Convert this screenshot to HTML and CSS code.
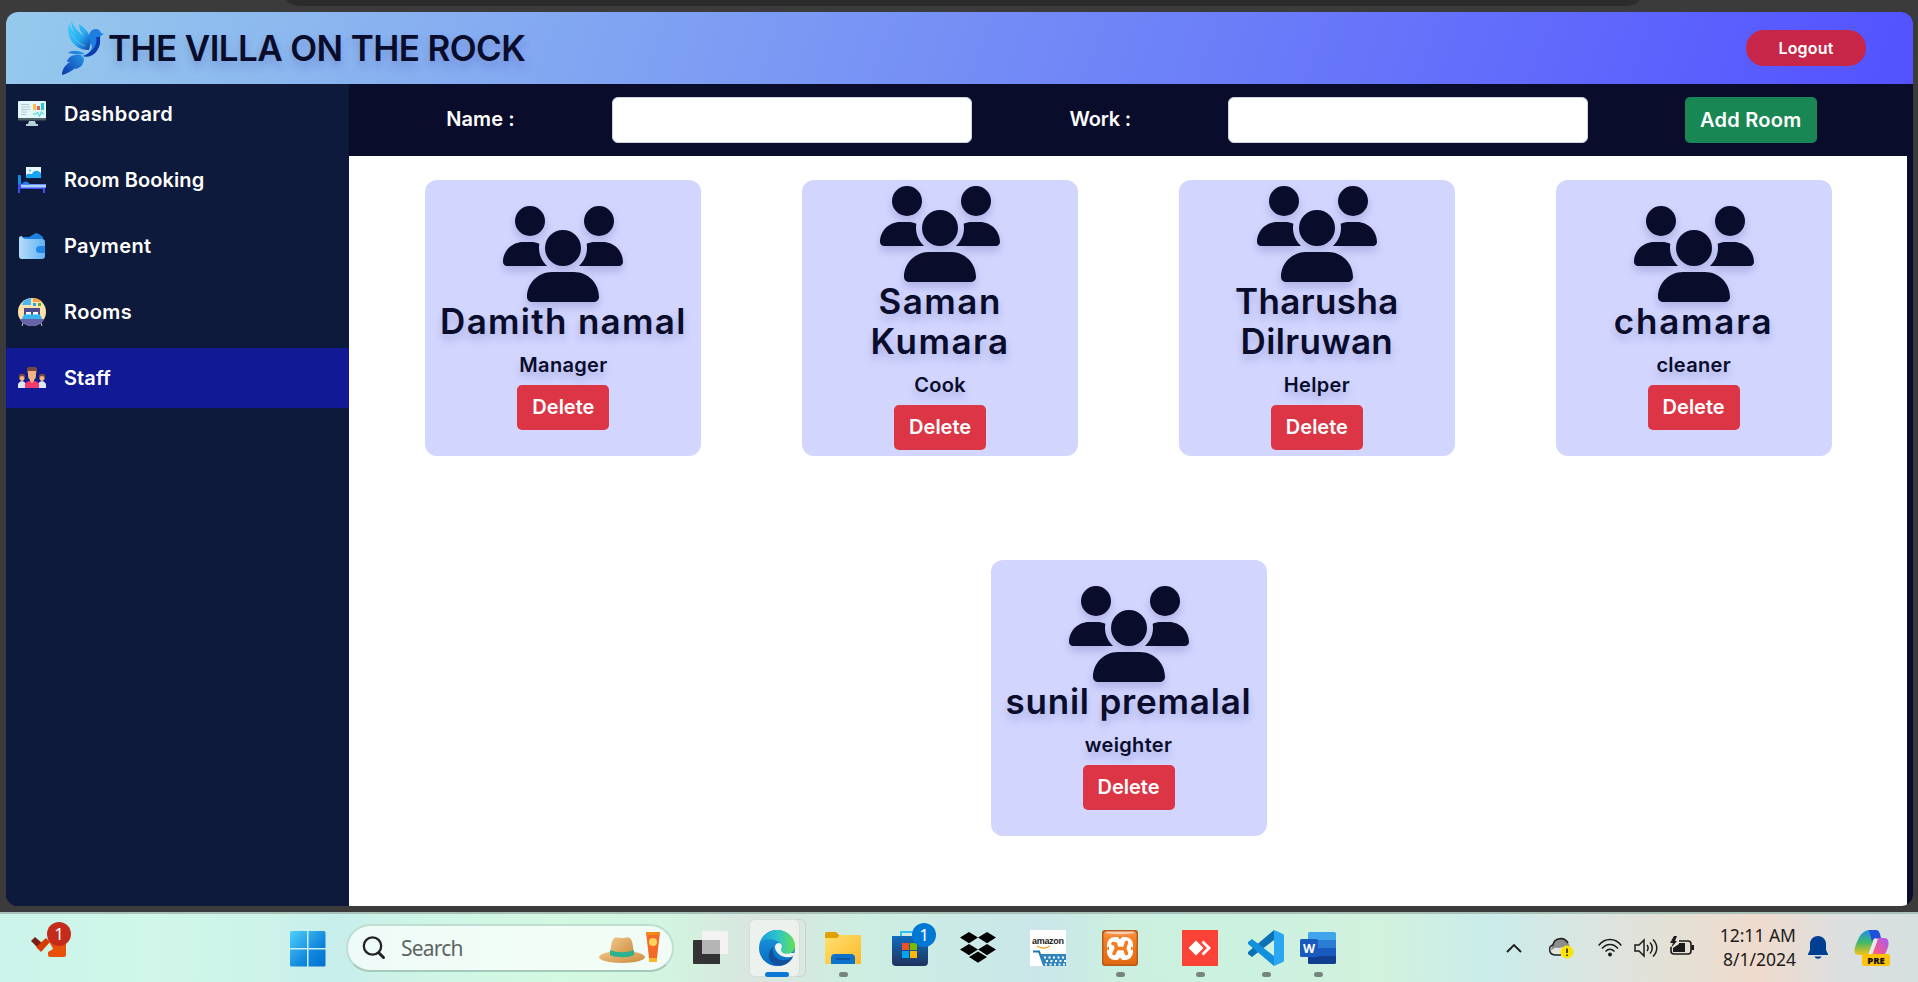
FILE: index.html
```html
<!DOCTYPE html>
<html lang="en">
<head>
<meta charset="utf-8">
<title>The Villa On The Rock</title>
<link rel="stylesheet" href="styles.css">
</head>
<body>
<svg width="0" height="0" class="defs">
  <defs>
    <linearGradient id="wing" x1="0" y1="0" x2="1" y2="1"><stop offset="0" stop-color="#3ad0fb"/><stop offset=".55" stop-color="#2aaef0"/><stop offset="1" stop-color="#0a3fae"/></linearGradient>
    <linearGradient id="tail" x1="1" y1="0" x2="0" y2="1"><stop offset="0" stop-color="#2aa0ee"/><stop offset="1" stop-color="#0a36a8"/></linearGradient>
    <linearGradient id="win" x1="0" y1="0" x2="1" y2="1"><stop offset="0" stop-color="#4fd0fd"/><stop offset=".6" stop-color="#1287dc"/><stop offset="1" stop-color="#0070cf"/></linearGradient>
    <linearGradient id="wallet" x1="0" x2="1"><stop offset="0" stop-color="#b5dcfb"/><stop offset="1" stop-color="#62b2f3"/></linearGradient>
    <linearGradient id="folder" x1="0" y1="0" x2="1" y2="1"><stop offset="0" stop-color="#ffe06f"/><stop offset="1" stop-color="#fdb92b"/></linearGradient>
    <linearGradient id="bag" x1="0" y1="0" x2="0" y2="1"><stop offset="0" stop-color="#0f6cbd"/><stop offset="1" stop-color="#20325f"/></linearGradient>
    <linearGradient id="edgeTop" x1="0" x2="1"><stop offset="0" stop-color="#1a9fdc"/><stop offset=".5" stop-color="#2dc4cd"/><stop offset="1" stop-color="#62e150"/></linearGradient>
    <linearGradient id="edgeBlue" x1="0" y1="0" x2="0" y2="1"><stop offset="0" stop-color="#199be0"/><stop offset="1" stop-color="#0a6ac0"/></linearGradient>
    <linearGradient id="xampp" x1="0" y1="0" x2="0" y2="1"><stop offset="0" stop-color="#f5964e"/><stop offset=".3" stop-color="#f47a1f"/><stop offset="1" stop-color="#e06a12"/></linearGradient>
    <linearGradient id="copA" x1="0" y1="0" x2="0" y2="1"><stop offset="0" stop-color="#1f8fe8"/><stop offset=".5" stop-color="#43b86a"/><stop offset="1" stop-color="#f6c317"/></linearGradient>
    <linearGradient id="copB" x1="1" y1="0" x2="0" y2="1"><stop offset="0" stop-color="#a758f5"/><stop offset=".6" stop-color="#ee5a94"/><stop offset="1" stop-color="#fb8a4a"/></linearGradient>
    <linearGradient id="hat" x1="0" y1="0" x2="1" y2="1"><stop offset="0" stop-color="#f2c78a"/><stop offset="1" stop-color="#c98a3c"/></linearGradient>
    <symbol id="users" viewBox="0 0 640 512"><path d="M144 0a80 80 0 1 1 0 160A80 80 0 1 1 144 0zM512 0a80 80 0 1 1 0 160A80 80 0 1 1 512 0zM0 298.7C0 239.8 47.8 192 106.7 192h42.7c15.900 0 31 3.500 44.600 9.700c-1.300 7.200-1.900 14.700-1.900 22.300c0 38.200 16.800 72.500 43.300 96c-.2 0-.4 0-.7 0H21.300C9.600 320 0 310.400 0 298.700zM405.300 320c-.2 0-.4 0-.7 0c26.600-23.500 43.300-57.800 43.300-96c0-7.600-.7-15-1.900-22.300c13.600-6.300 28.700-9.700 44.600-9.700h42.700C592.200 192 640 239.800 640 298.700c0 11.800-9.600 21.300-21.300 21.300H405.300zM224 224a96 96 0 1 1 192 0 96 96 0 1 1-192 0zM128 485.300C128 411.700 187.700 352 261.300 352H378.700C452.300 352 512 411.700 512 485.300c0 14.700-11.900 26.700-26.700 26.700H154.700c-14.700 0-26.700-11.900-26.700-26.700z"/></symbol>
  </defs>
</svg>

<div class="browser-top"><div class="address-pill"></div></div>

<div class="window">
  <header class="header">
    <svg class="logo" viewBox="0 0 42 56">
      <path fill="url(#wing)" d="M9 1c0 6 2 11 5 15C10 12 8 7 7 4c-2 9 0 17 6 22 4 4 9 5 14 5l2-8C28 13 22 9 17 5c0 5 2 9 5 12C16 13 12 8 9 1z"/>
      <path fill="#1c7fe0" d="M27 18c0-5 3-8 7-8 3 0 4 2 5 4l3 1c-3 1-4 2-4 6 0 7-5 12-10 16-2 1-5 1-7 0 5-2 8-5 9-9z"/>
      <path fill="#0b3cae" d="M34 18c2 6-2 12-6 15-2 2-4 3-7 4 6 2 12-1 15-7 3-5 2-9 2-12z"/>
      <path fill="url(#tail)" d="M23 35c-6-4-13-4-17-1 6 1 11 2 17 1zM21 37c-7-3-15 0-16 6 7 0 12-3 16-6zM22 38C11 39 0 46 0 56c9-2 17-9 22-18zM22 39c-5 3-8 7-9 11 6-1 9-5 9-11z"/>
      <path stroke="#8cc8ef" stroke-width=".6" fill="none" d="M9 14c4 7 8 11 14 13"/>
    </svg>
    <h1 class="title">THE VILLA ON THE ROCK</h1>
    <button class="logout">Logout</button>
  </header>

  <div class="body">
    <nav class="sidebar">
      <a class="nav-item"><svg class="nav-icon" viewBox="0 0 28 28"><path fill="#e0f7fb" d="M1 1h26a1 1 0 0 1 1 1v17H0V2a1 1 0 0 1 1-1z"/><path fill="#4d6068" d="M0 18h28v1.500a1 1 0 0 1-1 1H1a1 1 0 0 1-1-1z"/><path fill="#b3d3da" d="M11 21h6l1 3h2v2H8v-2h2z"/><path stroke="#b7c7cc" d="M3 4.500h8M3 7h9M3 9.500h9M3 12h6M3 14.500h5"/><path fill="#fdbf4a" d="M15 4h3v6h-3z"/><path fill="#f4594f" d="M19 6h3v4h-3z"/><path fill="#22c7cf" d="M23 3h3v7h-3z"/><path fill="none" stroke="#35cfcf" d="M15 14h3l1.500-2 2 4.500 2-5 1.500 2.500h1"/></svg><span>Dashboard</span></a>
      <a class="nav-item"><svg class="nav-icon" viewBox="0 0 28 28"><path fill="#e9f7ff" d="M8 1h15v11H8z"/><path fill="#17a3f7" d="M8 9c2-2 4-1 6-1 1-3 4-4 6-3l3 2v5H8z"/><circle cx="12" cy="4.500" r="1" fill="#38b6f5"/><path fill="#0d8ef0" d="M0 9h2a1 1 0 0 1 1 1v10H0z"/><path fill="#3f4ff0" d="M0 18h28v4h-1v5h-2v-4H2v4H0z"/><path fill="#a9d3ff" d="M3 18.500h25v3H3z"/><path fill="#1d7bf0" d="M4 18.500c1-4 6-4 8 0z"/></svg><span class="tight">Room Booking</span></a>
      <a class="nav-item"><svg class="nav-icon" viewBox="0 0 28 28"><path fill="#1a82e2" d="M4 5h7l7-4 3 1 4 3v4H4z"/><path fill="url(#wallet)" d="M1 6c0-1 1-2 3-2 0 2 2 3 4 3h16a3 3 0 0 1 3 3v14a3 3 0 0 1-3 3H4a3 3 0 0 1-3-3z"/><path fill="#1f8ae6" d="M27 14v7h-5.500a3.500 3.500 0 0 1 0-7z"/></svg><span>Payment</span></a>
      <a class="nav-item"><svg class="nav-icon" viewBox="0 0 28 28"><circle cx="14" cy="14" r="14" fill="#fde3ab"/><path fill="#49b8f5" d="M5 4c3-3 6-4 8-4v7H4z"/><path fill="#f6a04a" d="M15 0c4 0 7 1.500 9 4h-9z"/><path fill="#2ba7e0" d="M15 5h3v3h-3z"/><path fill="#57ad36" d="M20 5h3v3h-3z"/><path fill="#4c4a8c" d="M6 10h16v10H6z"/><path fill="#fff" d="M8 14h5v3H8zM15 14h5v3h-5z"/><path fill="#38b4ef" d="M6 16.500h16l3 6H3z"/><path fill="#6763a8" d="M2 21h24c-2 4.500-7 7-12 7S4 25.500 2 21z"/><path stroke="#c9c7d8" d="M5 25l-1 3M23 25l1 3"/></svg><span>Rooms</span></a>
      <a class="nav-item active"><svg class="nav-icon" viewBox="0 0 28 28"><circle cx="4" cy="13" r="3.200" fill="#7a4a3e"/><circle cx="24" cy="13" r="3.200" fill="#7a4a3e"/><circle cx="4" cy="14.500" r="2.400" fill="#efb680"/><circle cx="24" cy="14.500" r="2.400" fill="#efb680"/><path fill="#dfe7f5" d="M0 24v-4c1-2 3-3 4-3s3 1 4 3v4zM20 24v-4c1-2 3-3 4-3s3 1 4 3v4z"/><path fill="#7a4a3e" d="M9 9V5c0-2 2-2 3-2h6l1 2v4z"/><path fill="#f0b57c" d="M10 7h8v5c0 2-1 3-2 4v3h-4v-3c-1-1-2-2-2-4z"/><path fill="#f23a6d" d="M7 24v-4c1-2 3-3 5-3l2 2 2-2c2 0 4 1 5 3v4z"/></svg><span class="tight">Staff</span></a>
    </nav>

    <main class="main">
      <form class="form-bar">
        <label class="lbl-name">Name :</label><input class="field" type="text">
        <label class="lbl-work">Work :</label><input class="field" type="text">
        <button class="add" type="button">Add Room</button>
      </form>
      <section class="cards">
        <article class="card"><svg class="people"><use href="#users"/></svg><h2 class="n1">Damith namal</h2><p>Manager</p><button class="delete">Delete</button></article>
        <article class="card"><svg class="people"><use href="#users"/></svg><h2 class="n2">Saman<br>Kumara</h2><p>Cook</p><button class="delete">Delete</button></article>
        <article class="card"><svg class="people"><use href="#users"/></svg><h2 class="n3">Tharusha<br>Dilruwan</h2><p>Helper</p><button class="delete">Delete</button></article>
        <article class="card"><svg class="people"><use href="#users"/></svg><h2 class="n4">chamara</h2><p>cleaner</p><button class="delete">Delete</button></article>
        <article class="card"><svg class="people"><use href="#users"/></svg><h2 class="n5">sunil premalal</h2><p>weighter</p><button class="delete">Delete</button></article>
      </section>
    </main>
  </div>
</div>

<footer class="taskbar">
  <div class="app widget"><svg viewBox="0 0 42 36"><path fill="#7c1d14" d="M1 15l4-4 7 6-3 6z"/><path fill="#d83b01" d="M6 21l10-9 4 4-9 10z"/><path fill="#e8510a" d="M18 13h18v16a2 2 0 0 1-2 2H20a2 2 0 0 1-2-2v-3l5-3z"/><path fill="#d0f4e8" d="M18 19l5 3-5 3z"/></svg><span class="badge red">1</span></div>
  <div class="app start"><svg viewBox="0 0 36 36"><path fill="url(#win)" d="M1.500 0H17v17H0V1.500A1.500 1.500 0 0 1 1.500 0zM18.500 0H34a1.500 1.500 0 0 1 1.500 1.500V17h-17zM0 18.500h17v17H1.500A1.500 1.500 0 0 1 0 34zM18.500 18.500h17V34a1.500 1.500 0 0 1-1.500 1.500H18.500z"/></svg></div>
  <div class="search">
    <svg class="lens" viewBox="0 0 24 24"><circle cx="10.500" cy="10" r="8.700" fill="none" stroke="#222" stroke-width="2.300"/><path stroke="#222" stroke-width="3" stroke-linecap="round" d="M17 17l4.500 4.500"/></svg>
    <span>Search</span>
    <svg class="summer" viewBox="0 0 62 34"><ellipse cx="23" cy="26" rx="23" ry="6" fill="url(#hat)"/><path fill="url(#hat)" d="M11 24c1-7 1-14 4-17 3-1 5 0 8 0s5-1 8 0c3 3 3 10 4 17-4 3-20 3-24 0z"/><path fill="#2bb391" d="M11 19c7 3 17 3 24 0v5c-6 3-18 3-24 0z"/><path fill="#f4692a" d="M47 1h14l-3 26h-8z"/><path fill="#f28a14" d="M47 1h14v3H47z"/><circle cx="54" cy="11" r="4" fill="#ffd65a"/><path fill="#f9b52a" d="M50 27h8v4h-8z"/></svg>
  </div>
  <div class="app taskview"><svg viewBox="0 0 36 36"><path fill="#333" d="M0 10a1 1 0 0 1 1-1h26v24H1a1 1 0 0 1-1-1z"/><path fill="#f3f3f3" d="M9 1a1 1 0 0 1 1-1h24a1 1 0 0 1 1 1v22H9z"/><path fill="#b5b5b5" d="M9 9h18v14H9z"/></svg></div>
  <div class="app edge"><svg viewBox="0 0 36 36"><circle cx="18" cy="18" r="18" fill="url(#edgeBlue)"/><path fill="#12509c" d="M14 17c-2 8 5 15 13 13 3 0 5-2 7-3C29 37 17 38 12 32c-4-5-2-12 2-15z"/><path fill="url(#edgeTop)" d="M1 13C4 4 11 0 18 0c10 0 18 7 18 16 0 5-4 8-8 8-5 0-7-2-6-4 2-3 1-7-4-9C12 8 4 9 1 13z"/><path fill="#edf5f3" d="M22 14c2 3 0 5 0 6 0 3 5 5 10 3h4c-1 4-5 5-10 4-7-1-11-8-10-11 1-3 4-4 6-2z"/></svg><i class="mark on"></i></div>
  <div class="app explorer"><svg viewBox="0 0 36 36"><path fill="#e2a000" d="M0 4a2 2 0 0 1 2-2h9l4 4v6H0z"/><path fill="url(#folder)" d="M0 8h12l3-3h20a1 1 0 0 1 1 1v27a1 1 0 0 1-1 1H1a1 1 0 0 1-1-1z"/><path fill="#0d72cc" d="M6 34v-6a4 4 0 0 1 4-4h16a4 4 0 0 1 4 4v6z"/><path stroke="#0a4f98" stroke-width="1.500" d="M11 29h14"/></svg><i class="mark"></i></div>
  <div class="app store"><svg viewBox="0 0 36 36"><path fill="none" stroke="#31c3ee" stroke-width="2" d="M9 8V2h16"/><path fill="url(#bag)" d="M0 6h36v26a4 4 0 0 1-4 4H4a4 4 0 0 1-4-4z"/><path fill="#f25022" d="M10 13h7v7h-7z"/><path fill="#7fba00" d="M18 13h7v7h-7z"/><path fill="#00a4ef" d="M10 21h7v7h-7z"/><path fill="#ffb900" d="M18 21h7v7h-7z"/></svg><span class="badge blue">1</span></div>
  <div class="app dropbox"><svg viewBox="0 0 36 36"><path d="M9 2l9 5.600-9 5.700-9-5.700zM27 2l9 5.600-9 5.700-9-5.700zM9 14l9 5.600-9 5.600-9-5.600zM27 14l9 5.600-9 5.600-9-5.600zM18 21.500l9 5.600-9 5.700-9-5.700z"/></svg></div>
  <div class="app amazon"><svg viewBox="0 0 36 36"><path fill="#fff" d="M0 0h36v36H0z"/><text x="2" y="14" textLength="32" class="amz">amazon</text><path fill="none" stroke="#f79400" stroke-width="1.200" d="M7 16c4 2.500 9 2.500 13 0"/><path fill="none" stroke="#1b78b4" stroke-width="2" d="M3 21.500h6l5 14M10 25h26"/><path fill="#2e86bd" d="M10 24h26v12H14z"/><path stroke="#fff" stroke-width="2" stroke-dasharray="2 2.500" d="M14 27.500h22M16 31h20M15 34.500h21"/></svg></div>
  <div class="app xampp"><svg viewBox="0 0 36 36"><rect width="36" height="36" rx="3" fill="#b85a1c"/><rect x="1.500" y="1.500" width="33" height="33" rx="3" fill="url(#xampp)"/><path fill="#fff" d="M4 1.500h28v1.800q-14 2-28 0z" opacity=".55"/><rect x="5" y="7" width="26" height="23" rx="8" fill="#fff"/><path fill="#f47a1f" d="M15.500 6.500h5L18 9.500zM15 30.500h6l-3-3zM4 18.500l3-2v4zM32 18.500l-3-2v4z"/><path fill="none" stroke="#f47a1f" stroke-width="3.600" stroke-linecap="round" d="M11 13.500l2.500.5 1 4.500-2.500 5M14.500 18.500h8M24.500 12.500l-2 6 2 5"/></svg><i class="mark"></i></div>
  <div class="app anydesk"><svg viewBox="0 0 36 36"><path fill="#fb4237" d="M0 0h36v36H0z"/><path fill="#fff" d="M14 10.500l7.500 7.500-7.500 7.500L6.500 18zM21.500 10.500l7.500 7.500-7.500 7.500-2-2L25 18l-5.500-5.500z"/></svg><i class="mark"></i></div>
  <div class="app vscode"><svg viewBox="0 0 36 36"><path fill="#0b70b4" d="M0 24v-2L26 0v10L4 27z"/><path fill="#1390dc" d="M0 14v-2l4-3 22 17v10z"/><path fill="#2aa6f3" d="M26 0l9 4 1 1v26l-1 1-9 4z"/></svg><i class="mark"></i></div>
  <div class="app word"><svg viewBox="0 0 36 36"><path fill="#41a5ee" d="M8 3.500A1.500 1.500 0 0 1 9.500 2h25A1.500 1.500 0 0 1 36 3.500V10H8z"/><path fill="#2b7cd3" d="M8 10h28v8H8z"/><path fill="#185abd" d="M8 18h28v8H8z"/><path fill="#103f91" d="M8 26h28v6.500a1.500 1.500 0 0 1-1.500 1.500h-25A1.500 1.500 0 0 1 8 32.500z"/><rect y="9" width="18" height="18" rx="1.500" fill="#185abd"/><text x="9" y="22.500" text-anchor="middle" class="wtext">W</text></svg><i class="mark"></i></div>

  <div class="tray">
    <svg class="t-chevron" viewBox="0 0 16 10"><path fill="none" stroke="#1b1b1b" stroke-width="1.800" d="M1 9l7-7 7 7"/></svg>
    <svg class="t-cloud" viewBox="0 0 26 24"><path fill="#8d8d8d" d="M3 10C4 3 13 0 18 6c2 2 3 3 3 6L10 17 2 14z"/><path fill="#e5e5e0" d="M2 17c0-4 4-6 8-5l9-2 2 9H6c-2 0-4 0-4-2z"/><path fill="none" stroke="#222" stroke-width="1.600" d="M12 19H7C-1 19-1 10 4 9 5 2 15 0 19 7"/><circle cx="18" cy="16" r="6.500" fill="#fde300"/><path stroke="#222" stroke-width="1.600" d="M18 12.500v4.500M18 18.500v1.500"/></svg>
    <svg class="t-wifi" viewBox="0 0 24 20"><g fill="none" stroke="#1b1b1b" stroke-width="1.500"><path d="M.7 7.500c6-8 16.600-8 22.600 0M4 10.500c4.500-5.500 11.500-5.500 16 0M7.500 13.500c2.700-3 6.300-3 9 0"/></g><circle cx="12" cy="16.500" r="2" fill="#1b1b1b"/></svg>
    <svg class="t-sound" viewBox="0 0 24 20"><path fill="none" stroke="#1b1b1b" stroke-width="1.500" d="M1 7h4l5-5v16l-5-5H1zM13 7c1.500 2 1.500 4 0 6M16 4.500c3 3 3 8 0 11M19 1.500c5 5 5 12 0 17"/></svg>
    <svg class="t-battery" viewBox="0 0 24 20"><path fill="none" stroke="#1b1b1b" stroke-width="1.600" d="M9 5h9a3 3 0 0 1 3 3v7a3 3 0 0 1-3 3H4a3 3 0 0 1-3-3v-4"/><path fill="#1b1b1b" d="M9 7h6v9H3v-4l6-4zM21.500 9H24v5h-2.500zM4 0L0 7h3l-2 5 6-7H5l2-5z"/></svg>
    <div class="clock"><span class="time">12:11 AM</span><span class="date">8/1/2024</span></div>
    <svg class="t-bell" viewBox="0 0 20 24"><path fill="#003e92" d="M10 0c5 0 8 4 8 8v6l2 4v1H0v-1l2-4V8c0-4 3-8 8-8zM6.500 20.500h7c-1 3-6 3-7 0z"/></svg>
    <svg class="t-copilot" viewBox="0 0 36 36"><path fill="url(#copA)" d="M10 2c1-1 3-2 5-2h8l-7 21c-1 3-2 4-5 4H5c-5 0-5-4-4-8C3 11 6 4 10 2z"/><path fill="#1d4fd8" d="M15 0h7c3 0 4 3 5 8h-4c-3 0-4 1-5 4z"/><path fill="url(#copB)" d="M22 8h8c5 0 5 5 4 9-2 6-5 12-11 12h-8z"/><path fill="#e8e8ec" d="M20 9h4l-6 16h-4z"/><rect x="8" y="24" width="28" height="12" rx="2" fill="#fdc30a"/><text x="22" y="33.500" text-anchor="middle" class="pre">PRE</text></svg>
  </div>
</footer>
</body>
</html>
```
FILE: styles.css
```css
* { box-sizing: border-box; }
body { margin: 0; width: 1918px; height: 982px; overflow: hidden; background: #3b3b3b; font-family: Inter, "Open Sans", sans-serif; display: flex; flex-direction: column; }
.defs { position: absolute; }
h1, h2, p { margin: 0; }
button { border: 0; font-family: inherit; padding: 0; }

.browser-top { height: 12px; flex: none; }
.address-pill { width: 1352px; height: 6px; margin-left: 287px; background: #2b2b2b; border-radius: 0 0 14px 14px / 0 0 6px 6px; }

.window { width: 1907px; height: 894px; margin-left: 6px; flex: none; border-radius: 12px; overflow: hidden; background: #090c2b; display: flex; flex-direction: column; }
.header { height: 72px; flex: none; padding: 0 47px 0 56px; display: flex; align-items: center; background: linear-gradient(110deg, #96caec, #5352ff); }
.logo { width: 42px; height: 56px; margin-top: -2px; }
.title { margin-left: 4px; flex: 1; color: #090c2b; font-size: 35px; font-weight: 600; line-height: 72px; letter-spacing: -0.6px; white-space: nowrap; text-shadow: 0 6px 9px rgba(60, 60, 160, .25); }
.logout { width: 120px; height: 36px; border-radius: 18px; background: #c72649; color: #fff; font-size: 16px; font-weight: 600; letter-spacing: .2px; }

.body { flex: 1; display: flex; min-height: 0; }
.sidebar { width: 343px; flex: none; background: #0e1a3b; display: flex; flex-direction: column; gap: 6px; }
.nav-item { height: 60px; padding-left: 12px; display: flex; align-items: center; gap: 18px; color: #fff; font-size: 20px; font-weight: 600; letter-spacing: .4px; }
.nav-item.active { background: #111a94; }
.nav-item .tight { letter-spacing: .1px; }
.nav-icon { width: 28px; height: 28px; }

.main { flex: 1; display: flex; flex-direction: column; }
.form-bar { height: 72px; flex: none; display: flex; align-items: center; justify-content: space-evenly; color: #fff; font-size: 20px; font-weight: 600; letter-spacing: .1px; }
.form-bar label { padding-bottom: 2px; }
.lbl-name { width: 69px; white-space: nowrap; }
.lbl-work { width: 61px; white-space: nowrap; letter-spacing: -.2px; }
.field { width: 360px; height: 46px; padding: 0; border: 1px solid #ced4da; border-radius: 6px; background: #fff; }
.add { width: 132px; height: 46px; margin-right: -1px; padding-bottom: 1px; border-radius: 5px; background: #198754; color: #fff; font-size: 20px; font-weight: 600; letter-spacing: .25px; }

.cards { flex: 1; margin-right: 6px; padding: 24px 25px 0 26px; background: #fff; display: flex; flex-wrap: wrap; align-content: flex-start; justify-content: space-around; row-gap: 104px; }
.card { width: 276px; height: 276px; margin: 0 40px; border-radius: 12px; background: #d2d6ff; color: #090c2b; display: flex; flex-direction: column; align-items: center; justify-content: center; text-shadow: 0 6px 9px rgba(60, 60, 140, .25); }
.people { width: 120px; height: 96px; flex: none; fill: #090c2b; filter: drop-shadow(0 5px 5px rgba(60, 60, 140, .25)); }
.card h2 { margin: -1px 0 10px; font-size: 35px; font-weight: 600; line-height: 40px; text-align: center; white-space: nowrap; }
.card .n1 { letter-spacing: 1.300px; }
.card .n2 { letter-spacing: 1.500px; }
.card .n3 { letter-spacing: .35px; }
.card .n4 { letter-spacing: 1.800px; }
.card .n5 { letter-spacing: .8px; }
.card p { height: 30px; margin-bottom: 4px; font-size: 20px; font-weight: 600; line-height: 29px; letter-spacing: .3px; }
.delete { width: 92px; height: 45px; padding-bottom: 2px; flex: none; border-radius: 5px; background: #dc3545; color: #fff; font-size: 20px; font-weight: 600; }

.taskbar { height: 70px; margin-top: 6px; flex: none; border-top: 2px solid #a9c0b9; display: flex; align-items: flex-start; font-family: "Noto Sans", "Open Sans", sans-serif;
  background: linear-gradient(90deg, #cbf3ea 0, #d0f7e9 150px, #cdf3e9 260px, #c8eeec 335px, #cff5e6 430px, #d3f9e2 560px, #d2f4e0 670px, #d9e5de 755px, #cdeee1 860px, #cbe9e7 980px, #cae6ea 1040px, #cbf0df 1120px, #cbf1df 1250px, #d2f2dd 1380px, #c9ecea 1490px, #dae5e1 1590px, #e8dfd2 1700px, #efdacd 1760px, #dcdfdf 1840px, #d6dfdf 1918px); }
.app { position: relative; width: 36px; height: 68px; padding-top: 16px; flex: none; }
.app svg { display: block; width: 36px; height: 36px; overflow: visible; }
.widget { width: 42px; margin-left: 30px; padding-top: 12px; }
.app.widget svg { width: 42px; }
.start { margin-left: 218px; padding-top: 17px; }
.search { width: 328px; height: 48px; margin: 10px 0 0 20px; padding: 0 11px 0 14px; flex: none; display: flex; align-items: center; border: 2px solid #bddfd2; border-bottom-color: #a5c9bb; border-radius: 24px; background: rgba(255, 255, 255, .7); color: #5c6562; font-size: 21px; }
.search span { margin-left: 15px; flex: 1; letter-spacing: -.8px; }
.lens { width: 24px; height: 24px; }
.summer { width: 62px; height: 34px; }
.taskview { margin-left: 19px; padding-top: 17px; }
.edge { width: 51px; height: 58px; margin: 5px 0 0 20px; padding: 10px 0 0 9px; border: 1px solid #d5dfd9; border-radius: 6px; background: #edf1ee; box-shadow: 6px 0 0 -1px #dce9e2, 6px 0 0 0 #c5d5cd; }
.explorer { margin-left: 25px; }
.store { margin-left: 31px; }
.dropbox { margin-left: 32px; }
.amazon { margin-left: 34px; }
.xampp { margin-left: 36px; }
.anydesk { margin-left: 44px; }
.vscode { margin-left: 30px; }
.word { margin-left: 16px; }
.mark { position: absolute; left: 14px; top: 58px; width: 9px; height: 5px; border-radius: 3px; background: #76857f; }
.mark.on { left: 15px; top: 52px; width: 24px; background: #0b78d7; }
.badge { position: absolute; width: 24px; height: 24px; border-radius: 50%; color: #fff; font-size: 17px; line-height: 24px; text-align: center; }
.red { left: 17px; top: 8px; background: #c42b1c; }
.blue { left: 20px; top: 9px; background: #0078d4; }
.amz { font: 700 9px "Liberation Sans", sans-serif; fill: #222; }
.wtext { font: 700 12.500px "Open Sans", sans-serif; fill: #fff; }
.pre { font: 800 9.500px "Open Sans", sans-serif; fill: #111; }

.tray { height: 68px; margin-left: 170px; display: flex; align-items: center; }
.tray svg { flex: none; }
.t-chevron { width: 16px; height: 10px; }
.t-cloud { width: 26px; height: 24px; margin-left: 27px; }
.t-wifi { width: 24px; height: 20px; margin-left: 23px; }
.t-sound { width: 24px; height: 20px; margin-left: 12px; }
.tray .t-battery { width: 24px; height: 20px; margin: -4px 0 0 12px; }
.clock { width: 93px; margin: -2px 0 0 9px; display: flex; flex-direction: column; align-items: flex-end; color: #1c1c1c; font-size: 17.500px; line-height: 24px; white-space: nowrap; }
.t-bell { width: 20px; height: 24px; margin-left: 12px; }
.t-copilot { width: 36px; height: 36px; margin-left: 26px; }
```
